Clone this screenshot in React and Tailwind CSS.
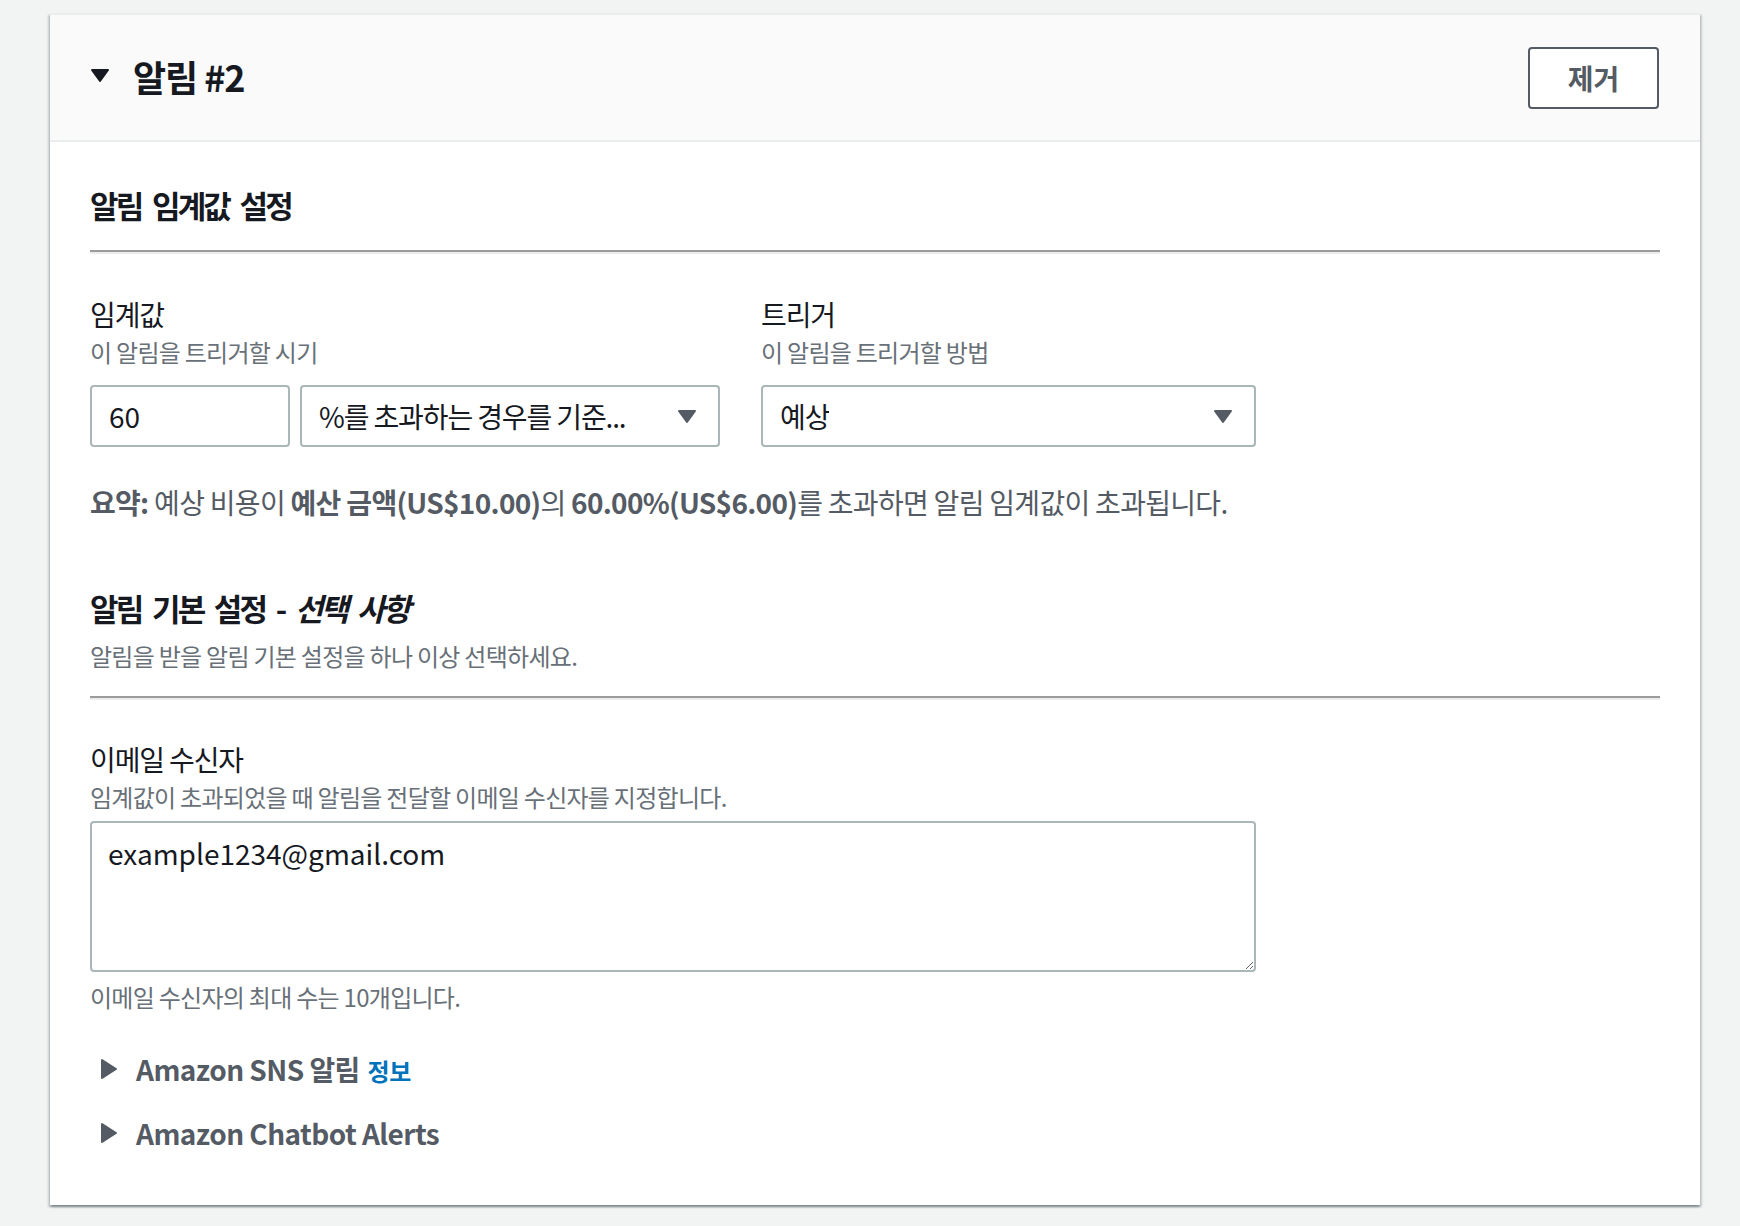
import React from 'react';

const Caret = ({ dir = 'down', className = '' }) => {
  if (dir === 'right') {
    return (
      <svg width="18" height="22" viewBox="0 0 18 22" className={className}>
        <polygon points="2,2 16,11 2,20" fill="currentColor" stroke="currentColor" strokeWidth="2" strokeLinejoin="round" />
      </svg>
    );
  }
  return (
    <svg width="20" height="15" viewBox="0 0 20 15" className={className}>
      <polygon points="2,2 18,2 10,13" fill="currentColor" stroke="currentColor" strokeWidth="2" strokeLinejoin="round" />
    </svg>
  );
};

const Divider = () => (
  <div className="h-[4px] border-t-2 border-[#9b9b9b] border-b-2 border-b-[#ececec]" />
);

const FieldLabel = ({ title, desc }) => (
  <div>
    <div className="text-[28px] leading-[36px] text-[#16191f] tracking-[-0.04em]">{title}</div>
    <div className="mt-[4px] text-[24px] leading-[32px] text-[#687078] tracking-[-0.03em]">{desc}</div>
  </div>
);

const SelectBox = ({ value, width }) => (
  <div className={`${width} h-[62px] border-2 border-[#aab7b8] rounded-[4px] bg-white flex items-center justify-between pl-[17px] pr-[21px]`}>
    <span className="text-[28px] text-[#16191f] tracking-[-0.04em] truncate">{value}</span>
    <Caret className="text-[#545b64] shrink-0" />
  </div>
);

const Expander = ({ children }) => (
  <div className="flex items-center h-[40px] text-[#545b64]">
    <div className="w-[46px] pl-[10px] flex items-center">
      <Caret dir="right" />
    </div>
    <div className="text-[28px] font-bold tracking-[-0.02em]">{children}</div>
  </div>
);

export default function App() {
  return (
    <div className="min-h-screen bg-[#f2f3f3] pt-[13px] pl-[50px] font-['Noto_Sans_CJK_KR',sans-serif]">
      <div className="w-[1650px] bg-white border-t-2 border-[#eaeded] shadow-[0_2px_2px_0_rgba(0,28,36,0.3),2px_2px_2px_0_rgba(0,28,36,0.15),-2px_2px_2px_0_rgba(0,28,36,0.15)]">
        {/* header */}
        <div className="h-[127px] bg-[#fafafa] border-b-2 border-[#eaeded] flex items-center justify-between pl-[40px] pr-[41px]">
          <div className="flex items-center gap-[23px] mb-[4px]">
            <Caret className="text-[#16191f]" />
            <h2 className="text-[36px] font-bold text-[#16191f] tracking-[-0.03em]">알림 #2</h2>
          </div>
          <button className="w-[131px] h-[62px] border-2 border-[#545b64] rounded-[4px] bg-white text-[28px] font-bold text-[#545b64]">
            제거
          </button>
        </div>

        {/* body */}
        <div className="px-[40px] pt-[43px] pb-[52px]">
          <h3 className="text-[31px] leading-[40px] font-bold text-[#16191f] tracking-[-0.09em] [word-spacing:0.2em]">알림 임계값 설정</h3>
          <div className="mt-[25px]">
            <Divider />
          </div>

          <div className="mt-[42px] flex gap-[41px]">
            <div className="w-[630px]">
              <FieldLabel title="임계값" desc="이 알림을 트리거할 시기" />
              <div className="mt-[17px] flex gap-[10px]">
                <div className="w-[200px] h-[62px] border-2 border-[#aab7b8] rounded-[4px] flex items-center px-[17px] text-[28px] text-[#16191f]">
                  60
                </div>
                <SelectBox value="%를 초과하는 경우를 기준..." width="w-[420px]" />
              </div>
            </div>
            <div className="w-[495px]">
              <FieldLabel title="트리거" desc="이 알림을 트리거할 방법" />
              <div className="mt-[17px]">
                <SelectBox value="예상" width="w-[495px]" />
              </div>
            </div>
          </div>

          <p className="mt-[35px] text-[28px] leading-[40px] text-[#545b64] tracking-[-0.025em]">
            <b>요약:</b> 예상 비용이 <b>예산 금액(US$10.00)</b>의 <b>60.00%(US$6.00)</b>를 초과하면 알림 임계값이 초과됩니다.
          </p>

          <h3 className="mt-[66px] text-[31px] leading-[40px] font-bold text-[#16191f] tracking-[-0.09em] [word-spacing:0.2em]">
            알림 기본 설정 - <i>선택 사항</i>
          </h3>
          <div className="mt-[12px] text-[24px] leading-[32px] text-[#687078] tracking-[-0.03em]">
            알림을 받을 알림 기본 설정을 하나 이상 선택하세요.
          </div>
          <div className="mt-[24px]">
            <Divider />
          </div>

          <div className="mt-[41px] w-[1166px]">
            <FieldLabel title="이메일 수신자" desc="임계값이 초과되었을 때 알림을 전달할 이메일 수신자를 지정합니다." />
            <textarea
              readOnly
              defaultValue="example1234@gmail.com"
              className="mt-[8px] block w-[1166px] h-[151px] border-2 border-[#aab7b8] rounded-[4px] px-[16px] py-[12px] text-[28px] leading-[36px] text-[#16191f] outline-none"
            />
            <div className="mt-[9px] text-[24px] leading-[32px] text-[#687078] tracking-[-0.03em]">
              이메일 수신자의 최대 수는 10개입니다.
            </div>
          </div>

          <div className="mt-[36px]">
            <Expander>
              Amazon SNS 알림 <span className="ml-[2px] text-[24px] text-[#0073bb]">정보</span>
            </Expander>
          </div>
          <div className="mt-[24px]">
            <Expander>Amazon Chatbot Alerts</Expander>
          </div>
        </div>
      </div>
    </div>
  );
}
